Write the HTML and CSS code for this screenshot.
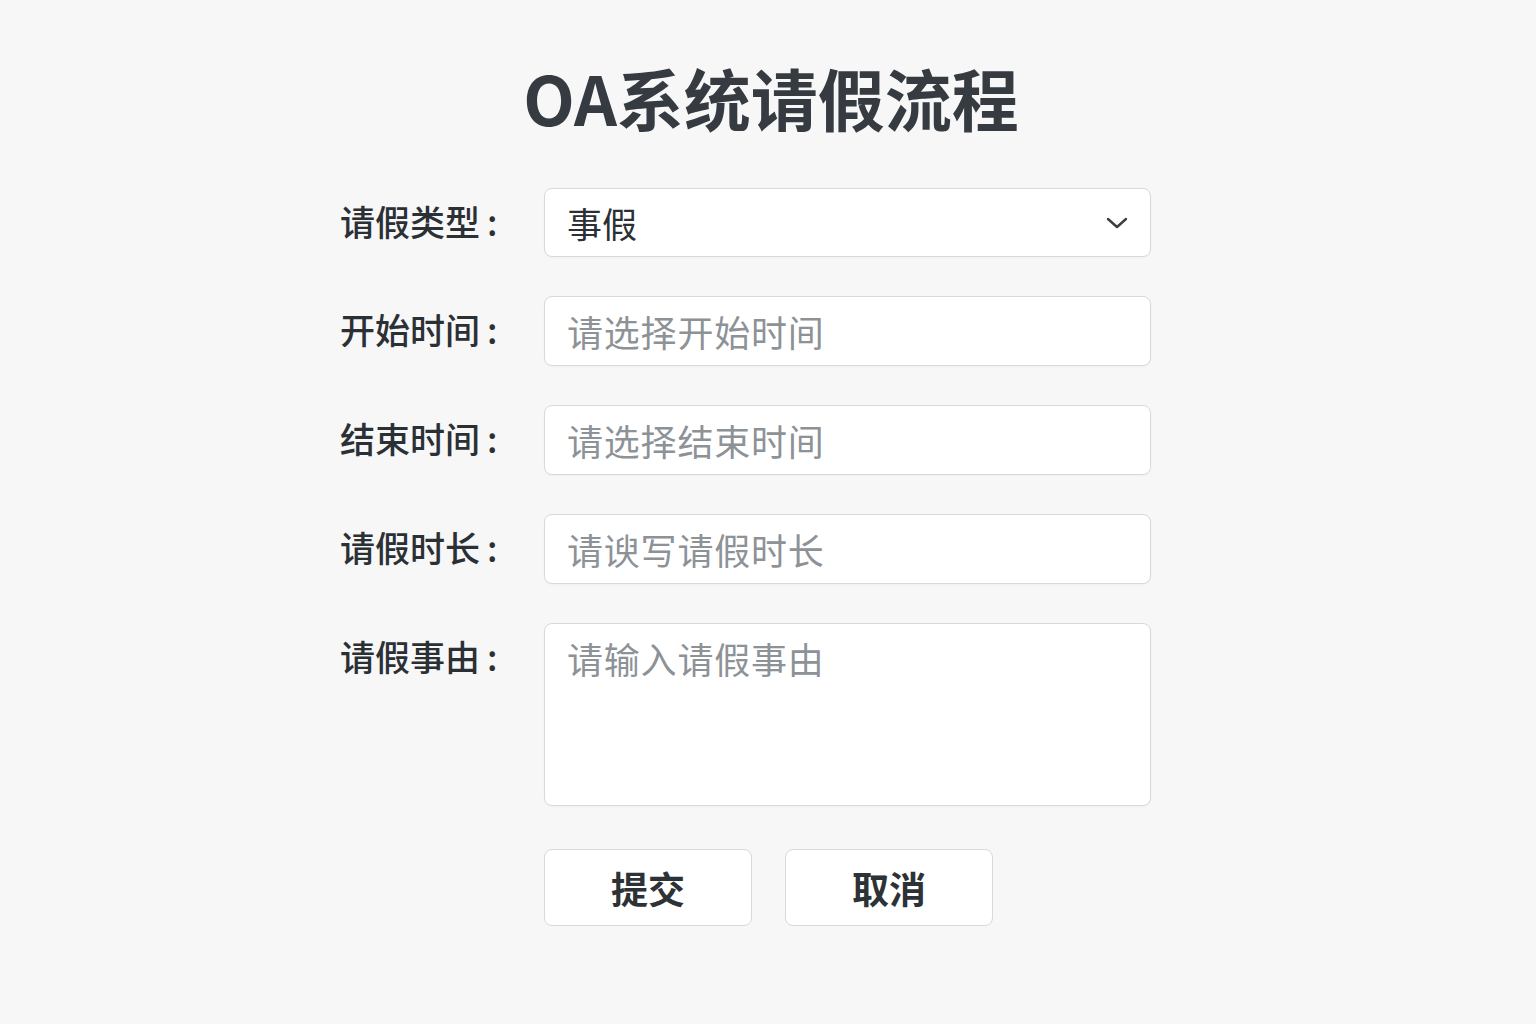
FILE: index.html
```html
<!DOCTYPE html>
<html lang="zh-CN">
<head>
<meta charset="utf-8">
<title>OA系统请假流程</title>
<link rel="stylesheet" href="styles.css">
</head>
<body>
<main class="page">
  <h1 class="title">OA系统请假流程</h1>
  <form class="form">
    <div class="row">
      <label class="label">请假类型<span class="colon">:</span></label>
      <div class="select-wrap">
        <select class="field select">
          <option>事假</option>
          <option>病假</option>
          <option>年假</option>
        </select>
        <svg class="chevron" width="22" height="14" viewBox="0 0 22 14"><path d="M2 3 L11 11 L20 3" fill="none" stroke="#3a3f44" stroke-width="2.4" stroke-linecap="round" stroke-linejoin="round"/></svg>
      </div>
    </div>
    <div class="row">
      <label class="label">开始时间<span class="colon">:</span></label>
      <input class="field" type="text" placeholder="请选择开始时间">
    </div>
    <div class="row">
      <label class="label">结束时间<span class="colon">:</span></label>
      <input class="field" type="text" placeholder="请选择结束时间">
    </div>
    <div class="row">
      <label class="label">请假时长<span class="colon">:</span></label>
      <input class="field" type="text" placeholder="请谀写请假时长">
    </div>
    <div class="row">
      <label class="label">请假事由<span class="colon">:</span></label>
      <textarea class="field area" placeholder="请输入请假事由"></textarea>
    </div>
    <div class="actions">
      <button type="button" class="btn">提交</button>
      <button type="button" class="btn">取消</button>
    </div>
  </form>
</main>
</body>
</html>
```

FILE: styles.css
```css
* { box-sizing: border-box; }
html, body {
  margin: 0;
  padding: 0;
  background: #f7f7f8;
}
body {
  font-family: "Noto Sans CJK SC", "Noto Sans", sans-serif;
  color: #2d3236;
}
.page {
  width: 1536px;
  height: 1024px;
  display: flex;
  flex-direction: column;
}
.title {
  margin: 53px 0 0 0;
  text-align: center;
  padding-left: 6px;
  font-size: 67px;
  line-height: 88px;
  font-weight: 700;
  color: #353b40;
}
.form {
  margin: 47px 0 0 340px;
  width: 811px;
  display: flex;
  flex-direction: column;
}
.row {
  display: flex;
  align-items: flex-start;
  margin-bottom: 39px;
}
.label {
  width: 204px;
  flex: none;
  font-size: 35px;
  line-height: 66px;
  font-weight: 500;
  color: #2b3035;
}
.colon {
  margin-left: 7px;
}
.field {
  width: 607px;
  height: 70px;
  border: 1px solid #d8d9db;
  border-radius: 8px;
  background: #ffffff;
  font-family: "Noto Sans CJK SC", "Noto Sans", sans-serif;
  font-size: 35px;
  color: #2b3035;
  padding: 0 0 0 22px;
  outline: none;
  box-shadow: 0 1px 2px rgba(0,0,0,0.03);
}
input.field,
textarea.field {
  font-size: 36px;
  letter-spacing: 0.8px;
}
.field::placeholder {
  color: #8d9297;
  opacity: 1;
}
.select-wrap {
  position: relative;
  width: 607px;
}
.select {
  appearance: none;
  -webkit-appearance: none;
  height: 69px;
}
.chevron {
  position: absolute;
  right: 23px;
  top: 28px;
  pointer-events: none;
}
.area {
  height: 183px;
  padding-top: 9px;
  resize: none;
  line-height: 50px;
}
.actions {
  display: flex;
  gap: 33px;
  margin: 4px 0 0 204px;
}
.btn {
  width: 208px;
  height: 77px;
  background: #ffffff;
  border: 1px solid #d8d9db;
  border-radius: 8px;
  font-family: "Noto Sans CJK SC", "Noto Sans", sans-serif;
  font-size: 37px;
  font-weight: 700;
  color: #2d3236;
  cursor: pointer;
}
```
